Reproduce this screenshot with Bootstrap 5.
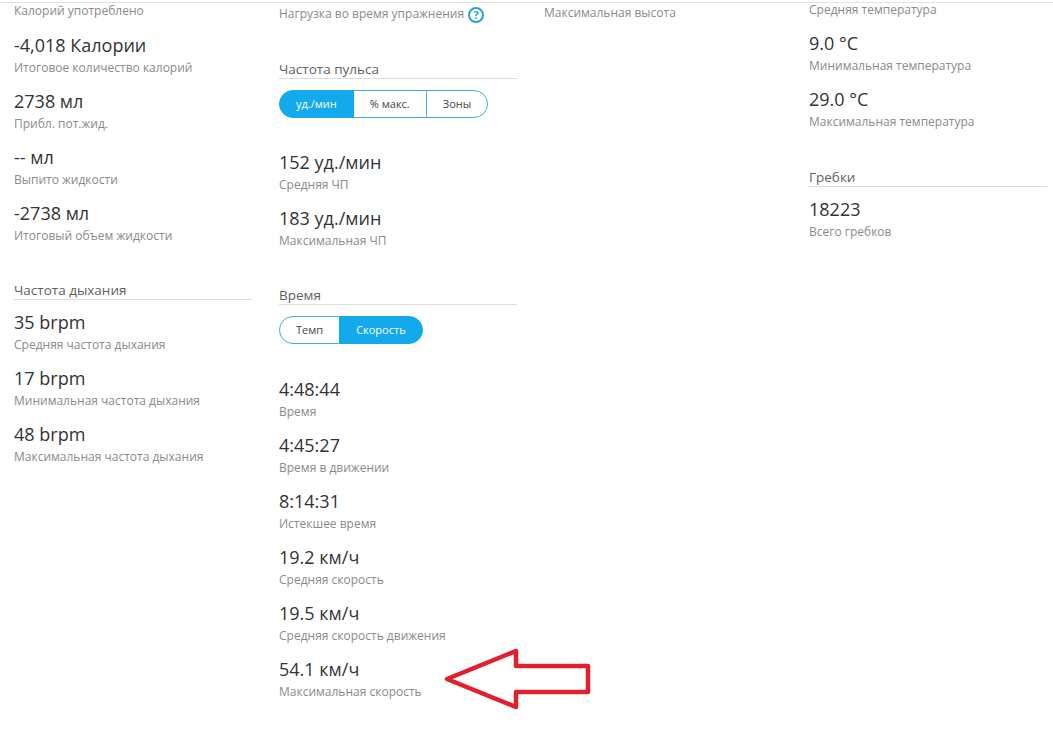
<!DOCTYPE html>
<html lang="ru">
<head>
  <meta charset="UTF-8">
  <meta name="viewport" content="width=device-width, initial-scale=1.0">
  <title>Сводка тренировки</title>
  <link href="https://cdn.jsdelivr.net/npm/bootstrap@5.3.0/dist/css/bootstrap.min.css" rel="stylesheet">
  <style>
    body { font-family: "Open Sans", "Noto Sans", sans-serif; background: #fff; overflow: hidden; }
    .top-rule { height: 3px; border-bottom: 1px solid #e2e2e2; }
    .stat-cols { padding-left: 14px; gap: 27px; margin-top: -2px; }
    .stat-col { flex: 0 0 238px; }
    .stat-col-2 { padding-top: 4px; }
    .stat-col-2 .stat-label + .stat-heading { margin-top: 37px; }
    .stat-col-3 { padding-top: 3px; }
    .stat-col-4 { margin-top: -1px; }
    .stat-col-4 .stat-first { margin-bottom: 12px; }
    .stat-col-4 .stat-heading { margin-top: 37px; }
    .stat-item { margin-bottom: 12px; }
    .stat-value { font-size: 18px; line-height: 24px; margin-bottom: 2px; color: #333; }
    .stat-label { font-size: 12px; line-height: 18px; color: #8a8a8a; }
    .stat-first { margin-top: 1px; margin-bottom: 13px; }
    .stat-heading { font-size: 13.5px; line-height: 18px; color: #5f5f5f; border-bottom: 1px solid #ddd; margin: 36px 0 10px; }
    .unit-toggle { margin-top: 1px; margin-bottom: 32px; height: 28px; }
    .unit-toggle-wide { margin-bottom: 33px; }
    .unit-toggle .btn { font-size: 11px; line-height: 26px; padding: 0 16px; color: #444; border-color: #4ba9da; border-radius: 14px; background: #fff; }
    .unit-toggle .btn.active { background: #13a9ec; border-color: #13a9ec; color: #fff; }
    .help-mark { display: inline-block; width: 16px; height: 16px; border: 2px solid #2b9fd8; border-radius: 50%; color: #2b9fd8; font-size: 11px; font-weight: 700; line-height: 12px; text-align: center; margin-left: 1px; vertical-align: -1px; }
    .note-arrow { position: absolute; left: 440px; top: 646px; }
  </style>
</head>
<body>
  <div class="top-rule"></div>
  <div class="d-flex stat-cols">

    <div class="stat-col">
      <div class="stat-label stat-first">Калорий употреблено</div>
      <div class="stat-item"><div class="stat-value">-4,018 Калории</div><div class="stat-label">Итоговое количество калорий</div></div>
      <div class="stat-item"><div class="stat-value">2738 мл</div><div class="stat-label">Прибл. пот.жид.</div></div>
      <div class="stat-item"><div class="stat-value">-- мл</div><div class="stat-label">Выпито жидкости</div></div>
      <div class="stat-item"><div class="stat-value">-2738 мл</div><div class="stat-label">Итоговый объем жидкости</div></div>
      <div class="stat-heading">Частота дыхания</div>
      <div class="stat-item"><div class="stat-value">35 brpm</div><div class="stat-label">Средняя частота дыхания</div></div>
      <div class="stat-item"><div class="stat-value">17 brpm</div><div class="stat-label">Минимальная частота дыхания</div></div>
      <div class="stat-item"><div class="stat-value">48 brpm</div><div class="stat-label">Максимальная частота дыхания</div></div>
    </div>

    <div class="stat-col stat-col-2">
      <div class="stat-label">Нагрузка во время упражнения <span class="help-mark">?</span></div>
      <div class="stat-heading">Частота пульса</div>
      <div class="btn-group unit-toggle" role="group">
        <button type="button" class="btn active">уд./мин</button>
        <button type="button" class="btn">% макс.</button>
        <button type="button" class="btn">Зоны</button>
      </div>
      <div class="stat-item"><div class="stat-value">152 уд./мин</div><div class="stat-label">Средняя ЧП</div></div>
      <div class="stat-item"><div class="stat-value">183 уд./мин</div><div class="stat-label">Максимальная ЧП</div></div>
      <div class="stat-heading">Время</div>
      <div class="btn-group unit-toggle unit-toggle-wide" role="group">
        <button type="button" class="btn">Темп</button>
        <button type="button" class="btn active">Скорость</button>
      </div>
      <div class="stat-item"><div class="stat-value">4:48:44</div><div class="stat-label">Время</div></div>
      <div class="stat-item"><div class="stat-value">4:45:27</div><div class="stat-label">Время в движении</div></div>
      <div class="stat-item"><div class="stat-value">8:14:31</div><div class="stat-label">Истекшее время</div></div>
      <div class="stat-item"><div class="stat-value">19.2 км/ч</div><div class="stat-label">Средняя скорость</div></div>
      <div class="stat-item"><div class="stat-value">19.5 км/ч</div><div class="stat-label">Средняя скорость движения</div></div>
      <div class="stat-item"><div class="stat-value">54.1 км/ч</div><div class="stat-label">Максимальная скорость</div></div>
    </div>

    <div class="stat-col stat-col-3">
      <div class="stat-label">Максимальная высота</div>
    </div>

    <div class="stat-col stat-col-4">
      <div class="stat-label stat-first">Средняя температура</div>
      <div class="stat-item"><div class="stat-value">9.0 °C</div><div class="stat-label">Минимальная температура</div></div>
      <div class="stat-item"><div class="stat-value">29.0 °C</div><div class="stat-label">Максимальная температура</div></div>
      <div class="stat-heading">Гребки</div>
      <div class="stat-item"><div class="stat-value">18223</div><div class="stat-label">Всего гребков</div></div>
    </div>
  </div>

  <svg class="note-arrow" width="154" height="66" viewBox="440 646 154 66">
    <polygon points="447,679 516,651 516,666 588,666 588,692 516,692 516,707" fill="none" stroke="#e0202c" stroke-width="4.5" stroke-linejoin="round"/>
  </svg>
</body>
</html>
